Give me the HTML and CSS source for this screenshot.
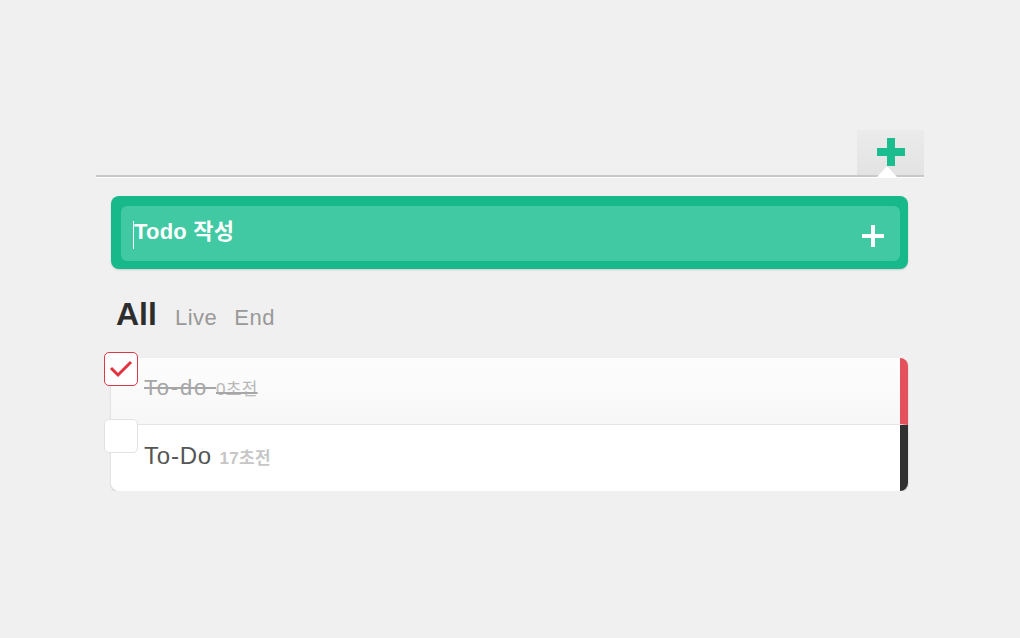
FILE: index.html
```html
<!DOCTYPE html>
<html lang="ko">
<head>
    <meta charset="UTF-8">
    <title>Todo</title>
    <link rel="stylesheet" href="styles.css">
</head>
<body>
    <div class="app">
        <!-- Header with add tab -->
        <div class="header">
            <div class="add-tab">
                <svg width="30" height="30" viewBox="0 0 30 30"><path d="M11 1h8v10h10v8H19v10h-8V19H1v-8h10z" fill="#1bbc8e"/></svg>
            </div>
        </div>

        <!-- Todo form -->
        <div class="todo-form">
            <div class="todo-input">
                <span class="caret"></span>
                <span class="placeholder">Todo 작성</span>
                <svg class="submit" width="22" height="22" viewBox="0 0 22 22"><path d="M9 0h4v9h9v4h-9v9H9v-9H0V9h9z" fill="#fff"/></svg>
            </div>
        </div>

        <!-- Filters -->
        <div class="filters">
            <span class="filter active">All</span>
            <span class="filter">Live</span>
            <span class="filter">End</span>
        </div>

        <!-- List -->
        <div class="todo-list">
            <div class="todo-item done">
                <span class="check checked">
                    <svg width="26" height="20" viewBox="0 0 26 20"><path d="M3 9l7 7L23 3" fill="none" stroke="#e0323f" stroke-width="3"/></svg>
                </span>
                <span class="title">To-do <small>0초전</small></span>
            </div>
            <div class="todo-item">
                <span class="check"></span>
                <span class="title">To-Do <small>17초전</small></span>
            </div>
        </div>
    </div>
</body>
</html>
```

FILE: styles.css
```css
/* Global */
body {
    margin: 0;
    background: #f0f0f0;
    font-family: "Liberation Sans", "Noto Sans CJK KR", sans-serif;
}

.app {
    width: 828px;
    margin-left: 96px;
    padding-top: 130px;
}

/* Header */
.header {
    display: flex;
    justify-content: flex-end;
    border-bottom: 2px solid #c8c8c8;
    box-shadow: 0 1px 0 #ffffff;
}

.add-tab {
    position: relative;
    width: 67px;
    height: 45px;
    background: linear-gradient(#ebebeb, #e3e3e3);
    display: flex;
    justify-content: center;
    padding-top: 7px;
    box-sizing: border-box;
}

.add-tab::after {
    content: "";
    position: absolute;
    bottom: -2px;
    left: 20px;
    border-left: 10px solid transparent;
    border-right: 10px solid transparent;
    border-bottom: 11px solid #ffffff;
}

/* Form */
.todo-form {
    margin: 19px 16px 0 15px;
    padding: 10px 8px 8px 10px;
    background: #17b98b;
    border-radius: 8px;
    box-shadow: 0 1px 2px rgba(0, 0, 0, 0.15);
}

.todo-input {
    height: 55px;
    background: #40c9a2;
    border-radius: 6px;
    display: flex;
    align-items: center;
    padding: 0 16px 0 12px;
}

.caret {
    width: 1px;
    height: 28px;
    background: #ffffff;
    margin-top: 2px;
}

.placeholder {
    color: #ffffff;
    font-size: 22px;
    font-weight: bold;
    letter-spacing: 0.2px;
    flex: 1;
    margin-top: -9px;
}

.submit {
    margin-top: 4px;
}

/* Filters */
.filters {
    display: flex;
    align-items: baseline;
    gap: 17px;
    margin: 27px 0 0 20px;
    height: 62px;
}

.filter {
    font-size: 22px;
    letter-spacing: 0.5px;
    color: #999999;
}

.filter.active {
    font-size: 32px;
    font-weight: bold;
    letter-spacing: 0;
    color: #2d2d2d;
    margin-right: 1px;
}

/* List */
.todo-list {
    margin-left: 15px;
    width: 797px;
    border-radius: 0 8px 8px 8px;
    box-shadow: 0 1px 2px rgba(0, 0, 0, 0.2);
}

.todo-item {
    position: relative;
    height: 66px;
    background: #ffffff;
    border-right: 8px solid #303030;
    border-radius: 0 0 8px 8px;
    display: flex;
    align-items: center;
    padding-left: 33px;
}

.todo-item.done {
    height: 66px;
    background: linear-gradient(#fdfdfd, #f7f7f7);
    border-right-color: #e4515b;
    border-bottom: 1px solid #e4e4e4;
    border-radius: 0 8px 0 0;
}

.check {
    position: absolute;
    left: -7px;
    top: -6px;
    width: 32px;
    height: 32px;
    border: 1px solid #e2e2e2;
    border-radius: 5px;
    background: #ffffff;
    display: flex;
    justify-content: center;
    align-items: center;
}

.check.checked {
    border: 1px solid #d93a45;
}

.title {
    font-size: 24px;
    letter-spacing: 0.8px;
    color: #555555;
    margin-top: -5px;
}

.title small {
    font-size: 17px;
    letter-spacing: 0.3px;
    font-weight: bold;
    color: #c6c6c6;
}

.done .title {
    font-size: 22px;
    letter-spacing: 1.8px;
    color: #a6a6a6;
    text-decoration: line-through;
    margin-top: -6px;
}

.done .title small {
    font-size: 17px;
    letter-spacing: 0.3px;
    font-weight: normal;
    color: #b8b8b8;
}
```
